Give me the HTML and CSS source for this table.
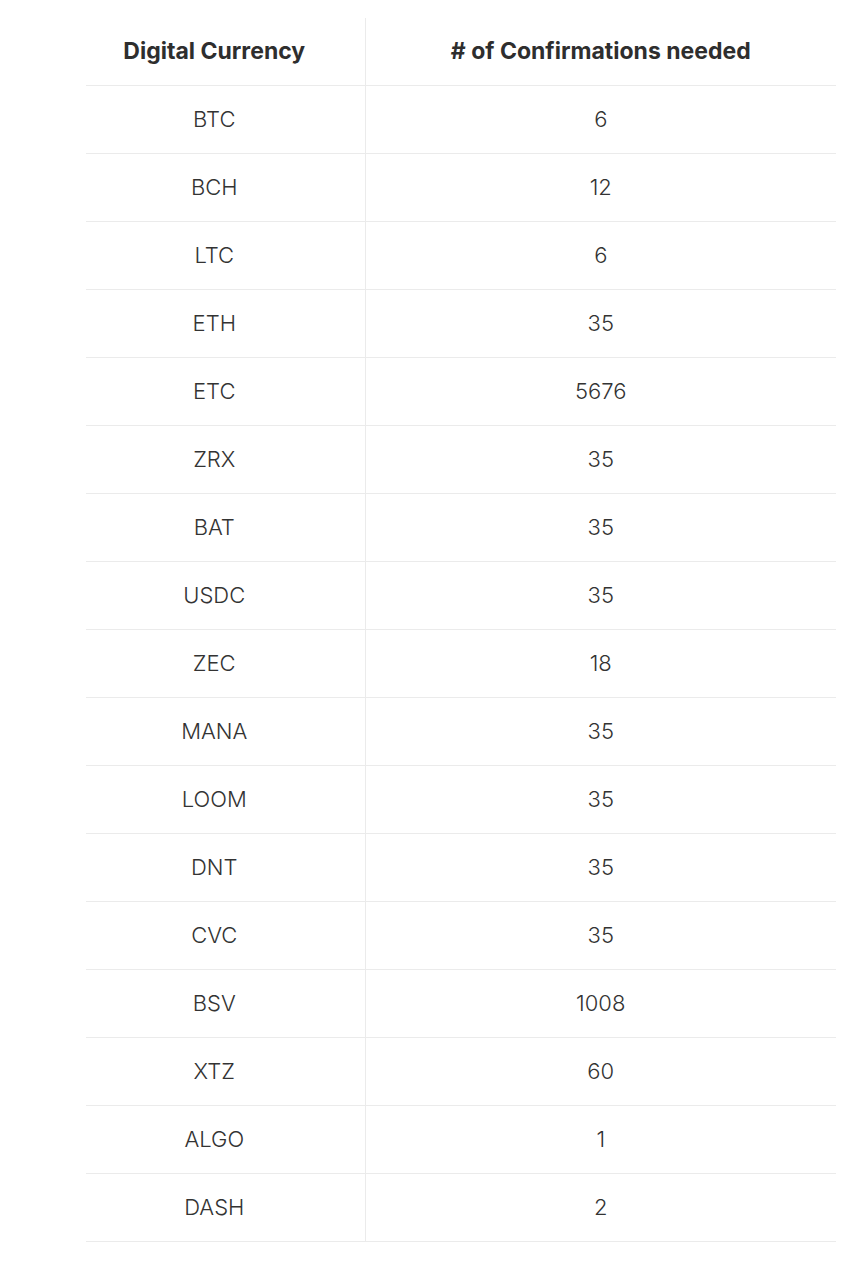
FILE: index.html
```html
<!DOCTYPE html>
<html>
<head>
<meta charset="utf-8">
<link rel="stylesheet" href="styles.css">
</head>
<body>
<div class="wrap">
<table class="conf">
<colgroup><col class="col1"><col class="col2"></colgroup>
<thead>
<tr><th class="c1">Digital Currency</th><th class="c2"># of Confirmations needed</th></tr>
</thead>
<tbody>
<tr><td class="c1">BTC</td><td class="c2">6</td></tr>
<tr><td class="c1">BCH</td><td class="c2">12</td></tr>
<tr><td class="c1">LTC</td><td class="c2">6</td></tr>
<tr><td class="c1">ETH</td><td class="c2">35</td></tr>
<tr><td class="c1">ETC</td><td class="c2">5676</td></tr>
<tr><td class="c1">ZRX</td><td class="c2">35</td></tr>
<tr><td class="c1">BAT</td><td class="c2">35</td></tr>
<tr><td class="c1">USDC</td><td class="c2">35</td></tr>
<tr><td class="c1">ZEC</td><td class="c2">18</td></tr>
<tr><td class="c1">MANA</td><td class="c2">35</td></tr>
<tr><td class="c1">LOOM</td><td class="c2">35</td></tr>
<tr><td class="c1">DNT</td><td class="c2">35</td></tr>
<tr><td class="c1">CVC</td><td class="c2">35</td></tr>
<tr><td class="c1">BSV</td><td class="c2">1008</td></tr>
<tr><td class="c1">XTZ</td><td class="c2">60</td></tr>
<tr><td class="c1">ALGO</td><td class="c2">1</td></tr>
<tr><td class="c1">DASH</td><td class="c2">2</td></tr>
</tbody>
</table>
</div>
</body>
</html>
```
FILE: styles.css
```css
html, body {
  margin: 0;
  padding: 0;
  background: #fff;
}
.wrap {
  padding: 18px 28px 0 86px;
}
.conf {
  border-collapse: collapse;
  table-layout: fixed;
  width: 750px;
  font-family: Inter, "Liberation Sans", sans-serif;
  font-variant-ligatures: none;
  color: #333;
}
.col1 { width: 279px; }
.col2 { width: 471px; }
.conf th, .conf td {
  padding: 0 0 2px 0;
  text-align: center;
  vertical-align: middle;
  line-height: 24px;
}
.conf th {
  height: 65px;
  font-weight: 700;
  font-size: 23px;
  color: #2e2e2e;
}
.conf td {
  height: 65px;
  font-weight: 300;
  font-size: 22px;
  border-top: 1px solid #ebebeb;
}
.conf tbody tr:last-child td {
  border-bottom: 1px solid #ebebeb;
}
.conf thead th {
  border-bottom: 1px solid #ebebeb;
}
.conf .c1 {
  padding-right: 22px;
  border-right: 1px solid #ebebeb;
}
```
